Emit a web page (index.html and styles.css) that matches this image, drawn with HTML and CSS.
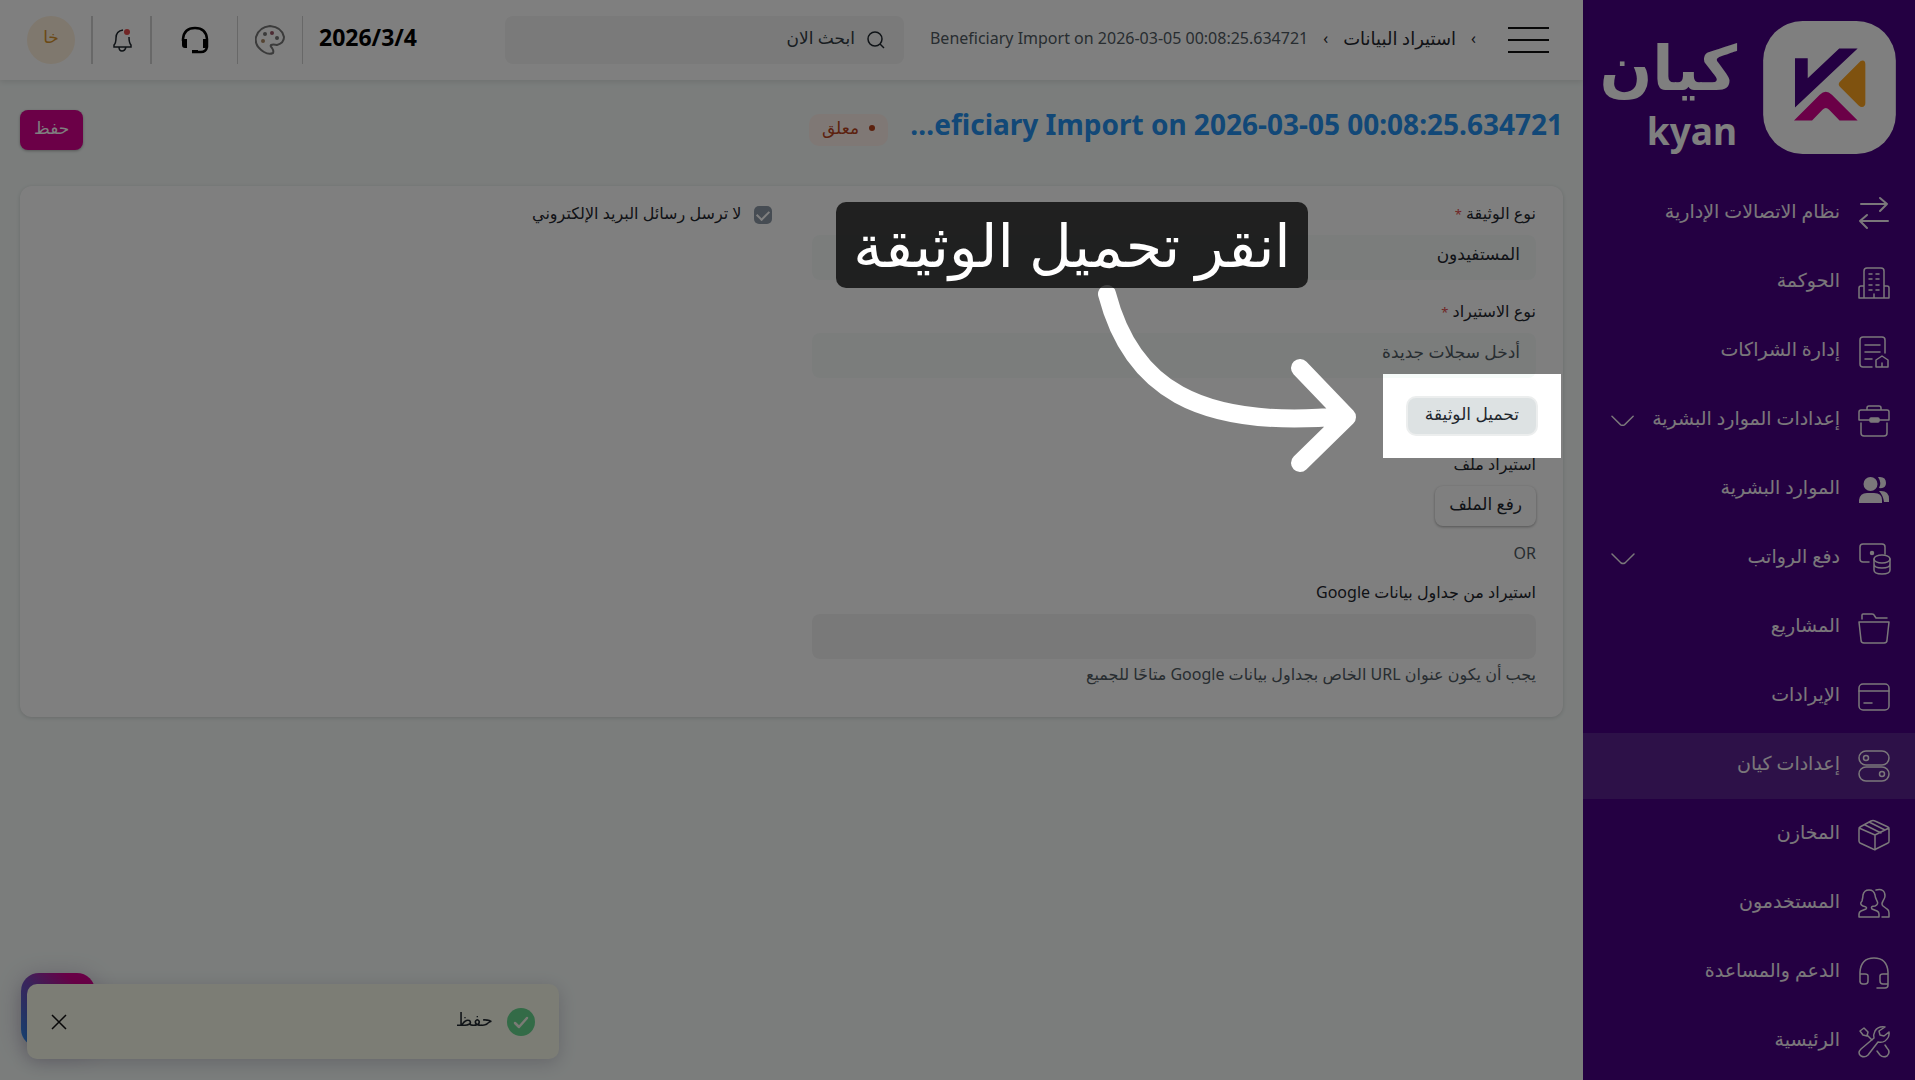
FILE: index.html
```html
<!DOCTYPE html>
<html lang="ar" dir="rtl">
<head>
<meta charset="utf-8">
<title>كيان</title>
<meta name="viewport" content="width=device-width, initial-scale=1">
<link rel="stylesheet" href="styles.css">
</head>
<body>
<aside class="sidebar">
  <a class="brand" href="#">
    <svg class="brand-mark" viewBox="551 64 396 397" aria-hidden="true">
      <rect x="551" y="64" width="396" height="397" rx="118" fill="#fff"/>
      <path d="M646 175H684V235L778 146H833L646 322Z" fill="#480084"/>
      <path d="M780 245L836 189Q842 182 848 182Q856 183 856 193V309Q856 320 846 321Q841 321 836 316L780 260Q773 252 780 245Z" fill="#ffa51e"/>
      <path d="M643 361L720 284Q738 267 756 284L833 361H779L748 329Q738 318 728 329L697 361Z" fill="#d6008e"/>
    </svg>
    <span class="brand-text"><span class="brand-ar">كيان</span><span class="brand-en">kyan</span></span>
  </a>
  <nav class="menu">
    <a class="item" href="#"><svg class="icon bold" viewBox="0 0 32 32"><path d="M3 6H29M22 0l7 6-7 7M30 23H2M9 17l-7 6 7 7"/></svg><span>نظام الاتصالات الإدارية</span></a>
    <a class="item" href="#"><svg class="icon" viewBox="0 0 32 32"><path d="M6 31V4q0-3 3-3h14q3 0 3 3v27M1 31V21q0-2 2-2h3M31 31V21q0-2-2-2h-3M1 31h30M16 31v-4"/><path d="M11 7h3M18 7h3M11 12h3M18 12h3M11 18h3M18 18h3M11 23h3M18 23h3"/></svg><span>الحوكمة</span></a>
    <a class="item" href="#"><svg class="icon" viewBox="0 0 32 32"><path d="M27 17V4q0-3-3-3H5Q2 1 2 4v24q0 3 3 3h9M7 9h15M7 16h15M7 23h7M18 31v-7l6-4 6 4v7zM24 31v-4"/></svg><span>إدارة الشراكات</span></a>
    <a class="item" href="#"><svg class="icon" viewBox="0 0 32 32"><path d="M9 5V3q0-2 2-2h10q2 0 2 2v2M1 7q0-2 2-2h26q2 0 2 2v8H1zM3 18v10q0 3 3 3h20q3 0 3-3V18"/><rect x="12" y="13" width="9" height="4" rx="1" fill="currentColor"/></svg><span>إعدادات الموارد البشرية</span><svg class="chevron" viewBox="0 0 24 12"><path d="M1 1l9 9q2 1 4 0l9-9"/></svg></a>
    <a class="item" href="#"><svg class="icon solid" viewBox="0 0 32 32"><circle cx="12.500" cy="10" r="7"/><path d="M1 29v-3q1-7 8-7h7q8 0 8 7v3zM20 3q8-1 8 6 0 6-7 5 3-5-1-11M21 17q10-1 10 8v3h-5q-1-7-5-11"/></svg><span>الموارد البشرية</span></a>
    <a class="item" href="#"><svg class="icon" viewBox="0 0 32 32"><path d="M11 19H5q-3 0-3-3V4q0-3 3-3h19q3 0 3 3v7"/><circle cx="14" cy="10" r="1.500" fill="currentColor"/><ellipse cx="24" cy="16" rx="8" ry="4"/><path d="M16 16v11q0 4 8 4t8-4V16M16 21q0 4 8 4t8-4"/></svg><span>دفع الرواتب</span><svg class="chevron" viewBox="0 0 24 12"><path d="M1 1l9 9q2 1 4 0l9-9"/></svg></a>
    <a class="item" href="#"><svg class="icon" viewBox="0 0 32 32"><path d="M4 7V3q0-1 1-1h9q2 0 2 1l2 3h11M1 10h30l-2 18q0 3-3 3H6q-3 0-3-3z"/></svg><span>المشاريع</span></a>
    <a class="item" href="#"><svg class="icon" viewBox="0 0 32 32"><rect x="1" y="3" width="30" height="26" rx="4"/><path d="M1 10h30M6 22h8"/></svg><span>الإيرادات</span></a>
    <a class="item active" href="#" aria-current="page"><svg class="icon" viewBox="0 0 32 32"><rect x="1" y="1" width="30" height="14" rx="7"/><rect x="1" y="17" width="30" height="14" rx="7"/><circle cx="8" cy="8" r="2.500"/><circle cx="24" cy="24" r="2.500"/></svg><span>إعدادات كيان</span></a>
    <a class="item" href="#"><svg class="icon" viewBox="0 0 32 32"><path d="M1 10q0-2 1-2l11-6q2-1 4 0l13 6q1 0 1 2v12q0 2-1 2l-12 6q-2 1-3 0L2 24q-1-1-1-2zM1 9l16 7 14-7M17 16v15M7 6l16 8M11 3l16 8"/></svg><span>المخازن</span></a>
    <a class="item" href="#"><svg class="icon" viewBox="0 0 32 32"><path d="M5 18q-4-2-1-5Q5 9 5 7q1-5 6-5t6 5q0 2 2 6 2 3-2 5-5 0-3 3l5 2q2 1 2 3v3H1v-3q0-2 2-3l5-2q2-2-3-3M18 2q9-2 9 6 0 2-2 5-2 3 0 5l4 3q2 1 2 4v4h-7"/></svg><span>المستخدمون</span></a>
    <a class="item" href="#"><svg class="icon" viewBox="0 0 32 32"><path d="M2 25V15Q3 1 16 1t14 14v13q0 3-3 3h-8M2 17h5q3 0 3 2v5q0 3-3 3H5q-3 0-3-3M30 17h-5q-3 0-3 2v5q0 3 3 3h5"/></svg><span>الدعم والمساعدة</span></a>
    <a class="item" href="#"><svg class="icon" viewBox="0 0 32 32"><path d="M27 1q-7-1-10 4-2 4-1 7L3 23q-4 4 0 7 4 2 7-1l10-13q4 1 7-1 5-4 4-9l-5 4-4-1-1-4zM2 5l4-3 4 4-1 4-4-1zM9 9l5 5M27 19l2 3q4 4 0 8-4 2-7-1l-3-4"/></svg><span>الرئيسية</span></a>
  </nav>
</aside>

<div class="page">
  <header class="topbar">
    <button class="burger" aria-label="القائمة"><span></span><span></span><span></span></button>
    <nav class="crumbs" aria-label="المسار">
      <span class="sep">›</span>
      <a href="#">استيراد البيانات</a>
      <span class="sep">›</span>
      <span class="current" dir="ltr">Beneficiary Import on 2026-03-05 00:08:25.634721</span>
    </nav>
    <label class="search">
      <svg viewBox="0 0 18 18" aria-hidden="true"><circle cx="8" cy="8" r="7"/><path d="M13 13l4 4"/></svg>
      <input type="search" placeholder="ابحث الان" aria-label="ابحث الان">
    </label>
    <div class="tools">
      <time class="date" datetime="2026-03-04" dir="ltr">2026/3/4</time>
      <button class="tool palette" aria-label="المظهر"><svg width="30" height="30" viewBox="0 0 30 30"><path d="M18 28Q14 30 9 27-1 21 1 12 4 2 15 1q12 1 14 11 0 6-7 8-4-1-6 0-1 1 1 3 2 3 1 5z" fill="none" stroke="#777" stroke-width="2"/><circle cx="10" cy="9" r="2" fill="#777"/><circle cx="17" cy="8" r="2" fill="#956"/><circle cx="22" cy="13" r="2" fill="#777"/><circle cx="8" cy="16" r="2" fill="#a86"/></svg></button>
      <button class="tool headset" aria-label="الدعم"><svg width="28" height="28" viewBox="0 0 28 28"><path d="M2 15V13Q3 2 14 2t12 11v8q-1 5-6 5h-9" fill="none" stroke="#000" stroke-width="2.500"/><path d="M1 13h5v9H4q-3 0-3-3zM27 13h-5v9h2q3 0 3-3zM11 24h6v3h-6z"/></svg></button>
      <button class="tool bell" aria-label="الإشعارات"><svg width="20" height="24" viewBox="0 0 20 24"><path d="M11 2Q4 3 4 10q0 5-2 7v2h17v-2q-2-2-2-8M7 19q0 4 3 4t4-4" fill="none" stroke="#1f272e" stroke-width="1.500"/><circle cx="15" cy="4" r="3" fill="#e24c4c"/></svg></button>
      <button class="avatar">خا</button>
    </div>
  </header>

  <main class="content">
    <div class="page-head">
      <h1 class="title">Beneficiary Import on 2026-03-05 00:08:25.634721</h1>
      <span class="badge"><i></i>معلق</span>
      <button class="btn primary">حفظ</button>
    </div>

    <form class="card">
      <div class="col">
        <div class="field">
          <label for="doctype">نوع الوثيقة <b>*</b></label>
          <input id="doctype" class="box strong" type="text" value="المستفيدون" readonly>
        </div>
        <div class="field">
          <label for="mode">نوع الاستيراد <b>*</b></label>
          <input id="mode" class="box" type="text" value="أدخل سجلات جديدة" readonly>
        </div>
        <div class="download">
          <button type="button" class="btn grey">تحميل الوثيقة</button>
          <div class="spotlight">
            <svg class="arrow" viewBox="1090 280 270 200" aria-hidden="true"><path d="M1107 294C1131 386 1196 430 1344 416M1300 368L1347 417L1300 463"/></svg>
            <p class="callout">انقر تحميل الوثيقة</p>
          </div>
        </div>
        <div class="field">
          <label for="upload">استيراد ملف</label>
          <button type="button" id="upload" class="btn outline">رفع الملف</button>
        </div>
        <p class="or">OR</p>
        <div class="field">
          <label for="sheet">استيراد من جداول بيانات Google</label>
          <input id="sheet" class="box plain" type="url">
          <p class="help">يجب أن يكون عنوان URL الخاص بجداول بيانات Google متاحًا للجميع</p>
        </div>
      </div>
      <div class="col">
        <label class="check"><input type="checkbox" checked><span>لا ترسل رسائل البريد الإلكتروني</span></label>
      </div>
    </form>
  </main>
</div>

<button class="chat" aria-label="المحادثة"></button>
<div class="toast" role="status">
  <svg class="ok" viewBox="0 0 28 28" aria-hidden="true"><circle cx="14" cy="14" r="14" fill="#66d68e"/><path d="M8 15l4 4 8-9" fill="none" stroke="#f4f6ea" stroke-width="2.500" stroke-linecap="round" stroke-linejoin="round"/></svg>
  <span>حفظ</span>
  <button class="close" aria-label="إغلاق"><svg viewBox="0 0 16 16"><path d="M1 1l14 14M15 1L1 15"/></svg></button>
</div>
</body>
</html>
```
FILE: styles.css
```css
* { box-sizing: border-box; }
body {
  margin: 0;
  display: flex;
  align-items: stretch;
  min-height: 100vh;
  overflow-x: hidden;
  background: #f6fbf9;
  color: #1f272e;
  font: 16px/24px "Noto Sans", "DejaVu Sans", sans-serif;
}
button, input { font: inherit; color: inherit; }
button { cursor: pointer; border: 0; background: none; padding: 0; }
a { color: inherit; text-decoration: none; }
p, h1 { margin: 0; }

/* Sidebar */
.sidebar { flex: 0 0 332px; min-width: 0; background: #480084; color: #fff; }
.brand { display: flex; gap: 26px; height: 181px; padding: 21px 19px 0 0; }
.brand-mark { flex: none; width: 133px; height: 133px; }
.brand-text { display: flex; flex-direction: column; padding-top: 2px; font-weight: 700; text-align: right; }
.brand-ar { font-size: 62px; line-height: 86px; }
.brand-en { font-size: 37px; line-height: 44px; }
.menu { display: flex; flex-direction: column; gap: 3px; }
.item {
  display: flex;
  align-items: center;
  height: 66px;
  padding: 0 25px 0 28px;
  gap: 18px;
  font-size: 19px;
  color: #f5eff5;
  white-space: nowrap;
}
.item span { padding-bottom: 6px; }
.item.active { background: #5a2290; }
.icon { flex: none; width: 32px; height: 32px; overflow: visible; fill: none; stroke: currentColor; stroke-width: 1.500; stroke-linecap: round; stroke-linejoin: round; }
.icon.bold { stroke-width: 2; }
.icon.solid { fill: currentColor; stroke: none; }
.chevron { width: 24px; height: 12px; margin-right: auto; fill: none; stroke: currentColor; stroke-width: 1.500; stroke-linecap: round; }

/* Top bar */
.page { flex: 1; min-width: 0; }
.topbar {
  position: relative;
  display: flex;
  align-items: center;
  height: 80px;
  padding: 0 34px 0 27px;
  background: #fff;
  box-shadow: 0 2px 6px rgba(0, 0, 0, .1);
}
.burger { display: flex; flex-direction: column; gap: 10px; width: 41px; }
.burger span { height: 2px; background: #111; }
.crumbs { display: flex; align-items: center; gap: 15px; margin-right: 32px; padding-bottom: 4px; white-space: nowrap; }
.crumbs a { font-size: 18px; font-weight: 500; }
.crumbs .current { color: #505a62; }
.search {
  display: flex;
  align-items: center;
  gap: 12px;
  flex: 0 1 399px;
  height: 48px;
  margin-right: 26px;
  padding: 0 19px;
  border-radius: 8px;
  background: #f4f4f4;
}
.search svg { width: 18px; height: 18px; fill: none; stroke: #1f272e; stroke-width: 1.500; }
.search input { flex: 1; min-width: 0; border: 0; padding: 0 0 5px; background: none; outline: 0; font-size: 17px; }
.search input::placeholder { color: #333c44; opacity: 1; }
.tools { display: flex; align-items: center; height: 48px; margin-right: auto; }
.date { font-size: 23px; font-weight: 700; color: #000; padding: 0 0 6px 16px; white-space: nowrap; }
.tool { display: flex; align-items: center; justify-content: center; height: 48px; border-right: 1px solid #d1d1d1; }
.tool.palette { width: 65px; }
.tool.headset { width: 86px; }
.tool.bell { width: 61px; border-right-width: 2px; border-left: 2px solid #d1d1d1; }
.avatar { width: 48px; height: 48px; margin-right: 16px; padding-bottom: 6px; border-radius: 50%; background: #fff0dc; color: #d6922a; font-size: 17px; }

/* Page heading */
.content { padding: 0 20px; }
.page-head { display: flex; align-items: center; height: 106px; padding-bottom: 6px; gap: 19px; }
.title { max-width: 656px; overflow: hidden; text-overflow: ellipsis; white-space: nowrap; font-size: 28px; line-height: 40px; font-weight: 700; color: #2490ef; padding-bottom: 12px; }
.badge { display: flex; align-items: center; gap: 10px; height: 32px; padding: 0 13px 5px; border-radius: 10px; background: #fff0ea; color: #b8421c; font-size: 17px; }
.badge i { width: 6px; height: 6px; border-radius: 50%; background: currentColor; }
.btn { height: 40px; padding: 0 14px 5px; border-radius: 8px; font-size: 17px; white-space: nowrap; }
.btn.primary { margin-right: auto; background: #d6008e; color: #fff; box-shadow: 0 1px 3px rgba(0, 0, 0, .3); }

/* Import form */
.card { display: grid; grid-template-columns: 1fr 1fr; gap: 40px; padding: 15px 27px 31px 27px; border-radius: 12px; background: #fff; box-shadow: 0 1px 4px rgba(0, 0, 0, .15); }
.col { display: flex; flex-direction: column; }
.field { display: flex; flex-direction: column; align-items: flex-start; }
.field label { height: 34px; }
.field label b { color: #e24c4c; font-size: 13px; font-weight: 400; }
.box { width: 100%; height: 45px; margin-bottom: 19px; padding: 0 16px 9px; border: 0; border-radius: 8px; background: #f6fbf9; color: #505a62; font-size: 17px; }
.box.strong { color: #1f272e; }
.box.plain { background: #f3f3f3; margin-bottom: 3px; }
.download { position: relative; display: flex; margin-bottom: 17px; }
.btn.grey { height: 36px; margin: 1px 0; padding: 0 17px 5px; background: #dde2e3; box-shadow: 0 0 0 2px #eceeee; }
.btn.outline { margin-bottom: 15px; background: #fff; box-shadow: 0 1px 3px rgba(0, 0, 0, .35); }
.or { margin-bottom: 15px; color: #505a62; }
.help { color: #505a62; }
.check { display: flex; align-items: center; gap: 12px; }
.check span { padding-bottom: 4px; }
.check input { appearance: none; display: flex; justify-content: center; width: 18px; height: 18px; margin: 0; border-radius: 5px; background: #8d99a6; }
.check input::after { content: ""; width: 6px; height: 10px; margin-top: 2px; border: solid #fff; border-width: 0 2px 2px 0; transform: rotate(45deg); }

/* Guided step: dims everything except the highlighted button */
.spotlight { position: absolute; z-index: 50; top: -23px; right: -25px; width: 178px; height: 84px; box-shadow: 0 0 0 4000px rgba(0, 0, 0, .5); pointer-events: none; }
.callout { position: absolute; top: -172px; right: 253px; width: 472px; height: 86px; border-radius: 10px; background: rgba(0, 0, 0, .75); color: #fff; font-size: 59px; line-height: 84px; text-align: center; white-space: nowrap; }
.arrow { position: absolute; top: -94px; right: 201px; width: 270px; height: 200px; fill: none; stroke: #fff; stroke-width: 18; stroke-linecap: round; stroke-linejoin: round; }

/* Floating */
.chat { position: fixed; left: 21px; bottom: 33px; width: 74px; height: 74px; border-radius: 18px; background: linear-gradient(45deg, #2490ef, #7a48b8 50%, #d6008e 80%); box-shadow: 0 4px 24px rgba(60, 20, 90, .25); }
.toast { position: fixed; left: 27px; bottom: 21px; display: flex; align-items: center; gap: 14px; width: 532px; height: 75px; padding: 0 24px; border-radius: 10px; background: #f8faeb; box-shadow: 0 4px 18px rgba(40, 30, 70, .2); font-size: 18px; }
.toast span { padding-bottom: 6px; }
.ok { width: 28px; height: 28px; }
.close { width: 16px; height: 16px; margin-right: auto; display: flex; }
.close svg { width: 16px; height: 16px; fill: none; stroke: #111; stroke-width: 1.500; }
```
